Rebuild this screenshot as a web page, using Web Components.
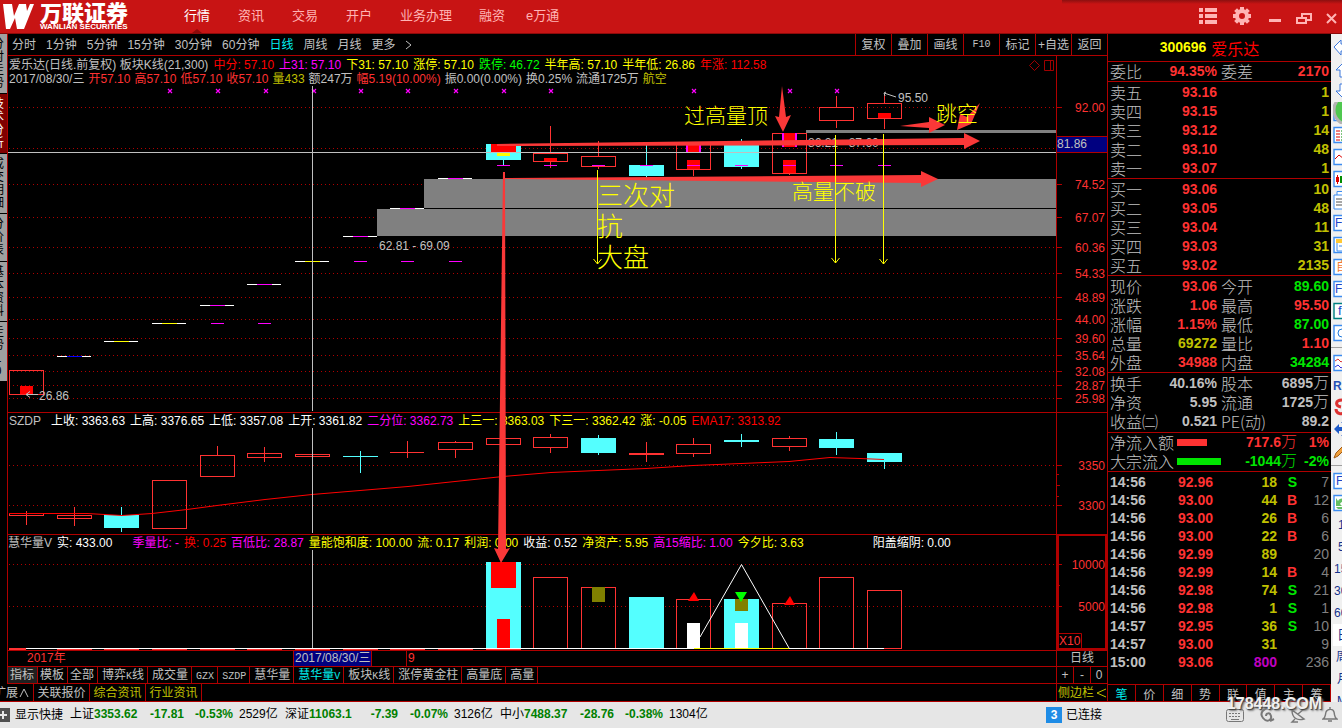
<!DOCTYPE html>
<html lang="zh-CN">
<head>
<meta charset="utf-8">
<title>万联证券 - 爱乐达 300696</title>
<style>
  html, body { margin: 0; background: #000; }
  body { font: 12px/14px "Liberation Sans", "Noto Sans CJK SC", sans-serif; color: #c0c0c0; }
</style>
</head>
<body>
<trade-app></trade-app>
<script>
const BASE = `
  *, *::before, *::after { box-sizing: border-box; }
  :host { display: block; min-width: 0; }
  button { appearance: none; border: 0; margin: 0; padding: 0; background: none; font: inherit; color: inherit; white-space: nowrap; cursor: pointer; }
  a { color: inherit; text-decoration: none; white-space: nowrap; }
  svg { display: block; }
  .red { color: #ff3232; } .pure { color: #f00; } .mag { color: #f0f; } .yel { color: #ff0; }
  .gold { color: #c0c000; } .grn { color: #00e600; } .lime { color: #0f0; } .wht { color: #fff; } .cyn { color: #00f0f0; } .dim { color: #808080; } .pur { color: #c000c0; }
`;
function define(name, css, html) {
  customElements.define(name, class extends HTMLElement {
    constructor() {
      super();
      const root = this.attachShadow({ mode: 'open' });
      root.innerHTML = `<style>${BASE}${css}</style>` + (typeof html === 'function' ? html(this) : html);
    }
  });
}

/* ---------- title bar ---------- */
define('app-header', `
  :host { display: flex; align-items: flex-start; height: 34px; background: #c81414; border-bottom: 1px solid #8c0a0a; }
  .brand { display: flex; gap: 6px; width: 172px; padding: 2px 0 0 3px; color: #fff; }
  .brand svg { margin-top: 2px; }
  .names { display: flex; flex-direction: column; gap: 2px; white-space: nowrap; }
  .cn { font: 900 22px/18px "Noto Sans CJK SC", sans-serif; }
  .en { font: bold 8px/9px "Liberation Sans", sans-serif; }
  nav { display: grid; grid-template-columns: 54px 54px 54px 54px 79px 47px auto; padding-left: 12px; font-size: 13px; line-height: 32px; color: #ffb4b4; }
  nav a { display: block; }
  nav .on { display: flex; flex-direction: column; align-items: center; width: 26px; height: 33px; color: #fff; }
  .on svg { margin-top: -3px; }
  .tools { flex: 1; display: flex; justify-content: flex-end; align-items: flex-start; gap: 14px; background: linear-gradient(#8c1010, #c81414) no-repeat right 0 top 0 / 280px 4px; height: 33px; padding: 7px 4px 0 0; }
`, `
  <div class="brand">
    <svg width="31" height="26" viewBox="0 0 31 26"><path fill="#fff" d="M0 0h9l2 12L16 0h7l1 7 3-7h4L21 25h-7l-2-11-5 11H3z"/></svg>
    <div class="names"><span class="cn">万联证券</span><span class="en">WANLIAN SECURITIES</span></div>
  </div>
  <nav>
    <a href="#" class="on">行情<svg width="10" height="4"><path d="M0 4L5 0l5 4z" fill="#8c0a0a"/></svg></a>
    <a href="#">资讯</a><a href="#">交易</a><a href="#">开户</a><a href="#">业务办理</a><a href="#">融资</a><a href="#">e万通</a>
  </nav>
  <div class="tools">
    <button aria-label="菜单"><svg width="20" height="18" fill="#ffb4b4"><path d="M1 1h4v4H1zM7 1h12v4H7zM1 7h4v4H1zM7 7h12v4H7zM1 13h4v4H1zM7 13h12v4H7z"/></svg></button>
    <button aria-label="设置"><svg width="20" height="18" viewBox="-10 -9 20 18" fill="none" stroke="#ffb4b4"><circle r="5" stroke-width="4"/><path d="M0-9V-6M0 6v3M-9 0h3M6 0h3M-6.400-6.400l2 2M4.400 4.400l2 2M-6.400 6.400l2-2M4.400-4.400l2-2" stroke-width="4"/></svg></button>
    <button aria-label="最小化"><svg width="16" height="18"><path d="M3 12h12v3H3z" fill="#ffb4b4"/></svg></button>
    <button aria-label="还原"><svg width="16" height="18" fill="none" stroke="#ffb4b4" stroke-width="2"><path d="M6 10V7h9v6h-4M1 11h9v5H1z"/></svg></button>
    <button aria-label="关闭"><svg width="12" height="18" fill="none" stroke="#ffb4b4" stroke-width="2"><path d="M1 7l9 9M10 7l-9 9"/></svg></button>
  </div>`);

/* ---------- vertical tabs on the left edge ---------- */
define('side-tabs', `
  :host { display: flex; flex-direction: column; width: 7px; overflow: hidden; background: #000; color: #000; }
  button { display: flex; justify-content: flex-end; width: 7px; padding: 4px 3px 0 0; overflow: hidden; background: #a0a0a0; border-bottom: 1px solid #000; align-items: flex-start; }
  span { width: 12px; flex: none; white-space: normal; line-height: 13px; word-break: break-all; }
  .t4 { height: 60px; } .t3 { height: 48px; }
  .sel { background: #800000; color: #fff; }
`, `
  <button class="t4"><span>分时走势</span></button><button class="t4 sel"><span>技术分析</span></button>
  <button class="t4"><span>成交明细</span></button><button class="t3"><span>分价表</span></button>
  <button class="t4"><span>基本资料</span></button><button class="t4"><span>走势10</span></button>`);

/* ---------- period toolbar ---------- */
define('period-bar', `
  :host { display: flex; justify-content: space-between; height: 22px; border-bottom: 1px solid #b00000; line-height: 20px; }
  .periods { display: flex; gap: 10px; padding-left: 4px; }
  .acts { display: flex; }
  .acts button { width: 36px; border-left: 1px solid #b00000; }
  .acts .lat { font: 10px/20px "Liberation Mono", monospace; }
`, `
  <div class="periods"><button>分时</button><button>1分钟</button><button>5分钟</button><button>15分钟</button><button>30分钟</button><button>60分钟</button><button class="cyn">日线</button><button>周线</button><button>月线</button><button>更多</button>
  <button aria-label="展开"><svg width="6" height="10" fill="none" stroke="#c0c0c0"><path d="M0 1l5 4-5 4"/></svg></button></div>
  <div class="acts"><button>复权</button><button>叠加</button><button>画线</button><button class="lat">F10</button><button>标记</button><button>+自选</button><button>返回</button></div>`);

/* ---------- one line of coloured readings ---------- */
define('info-line', `
  :host { display: flex; gap: 5px; white-space: nowrap; background: #000; width: max-content; }
  :host([dense]) { gap: 4px; }
`, `<slot></slot>`);

/* ---------- chart geometry ---------- */
const RED = '#ff3232', CYAN = '#54ffff';
const CX = i => Math.round(26 + i * 47.67);
const box = (x, y, w, h, fill) => `<rect x="${x}" y="${y}" width="${w}" height="${h}" fill="${fill}"/>`;
const frame = (i, y1, y2) => `<rect x="${CX(i) - 16.5}" y="${y1 + .5}" width="34" height="${y2 - y1}" fill="none" stroke="${RED}"/>`;
const wick = (i, y1, y2, c = RED) => box(CX(i), y1, 1, y2 - y1, c);
const solid = (i, y1, y2) => box(CX(i) - 17, y1, 35, y2 - y1, CYAN);
const core = (i, y1, y2, c = '#f00') => box(CX(i) - 6, y1, 13, y2 - y1, c);
const GRID = [107,148,184,217,247,273,297,319,338,355,371,385,398,465,505,564,606];
const grid = () => GRID.map(y => `<path d="M9 ${y}.5H1056" stroke="#b00000" stroke-dasharray="1 3"/>`).join('');
const flat = (i, y, c) => box(CX(i) - 17, y, 34, 1, '#fff') + box(CX(i) - 7, y, 15, 1, c);
const dash = (i, y) => box(CX(i) - 6, y, 13, 1, '#f0f');

function priceMarks() {
  let s = frame(0, 370, 394) + core(0, 386, 394);
  s += box(424, 179, 1000, 29, '#808080') + box(377, 209, 1000, 27, '#808080') + box(806, 130, 1000, 3, '#808080');
  [[1,356,'#00f'],[2,341,'#ff0'],[3,323,'#ff0'],[4,305,'#f0f'],[5,284,'#f0f'],[6,261,'#ff0'],[7,236,'#f0f'],[8,208,'#f0f'],[9,178,'#f0f']].forEach(a => s += flat(...a));
  [170,218,266,314,361,408,456,504,551,694,790,837].forEach(x => s += `<path d="M${x - 2} 89l4 4m0-4l-4 4" stroke="#f0f" stroke-width="1.2"/>`);
  s += solid(10,144,160) + box(491,144,25,8,'#f00') + box(497,153,13,3,'#ff0') + wick(10,160,165,CYAN);
  s += wick(11,126,153) + frame(11,153,161) + core(11,158,161) + wick(11,161,168);
  s += wick(12,141,156) + frame(12,156,166) + wick(12,166,169);
  s += wick(13,145,165,CYAN) + solid(13,165,176) + wick(13,176,178,CYAN);
  s += frame(14,144,169) + box(686,145,15,8,'#f0f') + box(688,145,11,8,'#f00') + core(14,160,169) + wick(14,169,176);
  s += wick(15,139,145,CYAN) + solid(15,145,167) + wick(15,167,169,CYAN);
  s += frame(16,133,173) + box(782,133,15,14,'#f0f') + box(784,133,11,14,'#f00') + core(16,160,173) + wick(16,173,175);
  s += wick(17,96,107) + frame(17,107,120) + wick(17,120,128);
  s += wick(18,94,103) + frame(18,103,118) + core(18,113,118) + wick(18,118,129);
  [[4,323],[5,323],[7,261],[8,261],[9,261]].forEach(a => s += dash(...a));
  for (let i = 10; i < 19; i++) s += dash(i, 165);
  s += `<path d="M38 394.5H26m4-3l-4 3 4 3M884 93l12 4m-10-5l-2 1 1 3" fill="none" stroke="#c0c0c0"/>`;
  s += `<g font-size="12" fill="#c0c0c0"><text x="39" y="400">26.86</text><text x="379" y="250">62.81 - 69.09</text><text x="898" y="102">95.50</text><text x="808" y="147">86.21 - 87.60</text></g>`;
  return s;
}
function indexMarks() {
  let s = wick(0,511,525) + frame(0,513,515) + wick(1,507,526) + frame(1,515,518) + solid(2,515,528) + wick(2,507,532,CYAN);
  s += frame(3,480,528) + wick(4,446,455) + frame(4,455,476) + wick(5,447,462) + frame(5,453,457) + wick(6,445,457,CYAN) + frame(6,454,456);
  s += solid(7,456,457) + wick(7,451,473,CYAN) + box(390,452,34,1,RED) + wick(8,441,458) + wick(9,441,442) + frame(9,442,449) + wick(9,450,458);
  s += frame(10,438,444) + wick(11,434,437) + frame(11,437,447) + wick(11,448,453) + solid(12,438,453) + wick(12,435,455,CYAN);
  s += box(629,453,35,2,RED) + wick(13,442,462) + frame(14,444,453) + wick(14,438,444) + wick(14,454,457);
  s += solid(15,440,442) + wick(15,434,447,CYAN) + frame(16,438,446) + wick(16,436,438) + wick(16,447,451) + solid(17,439,448) + wick(17,432,455,CYAN) + solid(18,453,462) + wick(18,453,469,CYAN);
  s += `<path fill="none" stroke="#f00" d="M9 513.5H87L122 515.5 152 513.5 187 509.5 217 505.5 265 499.5 312 494.5 360 490.5 408 486.5 455 481.5 503 476.5 551 472.5 598 470.5 646 468.5 693 465.5 741 463.5 789 461.5 830 457.5 860 458.5 884 459.5"/>`;
  return s;
}
function volumeMarks() {
  let s = solid(10,562,648) + box(491,562,25,26,'#f00') + core(10,619,648);
  s += frame(11,577,648) + frame(12,587,648) + core(12,587,602,'#808000') + solid(13,597,648) + frame(14,599,648) + box(687,623,13,25,'#fff');
  s += solid(15,599,648) + core(15,599,611,'#808000') + core(15,623,648,'#fff') + frame(16,603,648) + frame(17,577,648) + frame(18,590,648);
  s += `<path fill="#f00" d="M688 601h11l-5-9zM784 605h11l-5-9z"/><path fill="#0f0" d="M735 592h12l-6 10z"/>`;
  s += `<path d="M700 637L741.5 564.5 789 648" fill="none" stroke="#fff"/>`;
  s += box(9,648,17,2,RED) + box(26,648,858,1,'#fff') + box(694,648,95,1,'#ff0') + box(884,648,18,1,RED);
  for (let i = 1; i < 11; i++) s += box(CX(i) - 17, 649, 35, 1, RED);
  return s;
}
const notes = () => `
  <g fill="#fa3838">
    <path d="M782 86L786 117 791 115 783 132 775 116 779 117z"/>
    <path d="M497 144L964 138V133L980 141 964 149V145L497 146z"/>
    <path d="M504 178L921 175V171L938 179 921 187V183L504 179z"/>
    <path d="M503 172h2L506 549 510 548 501 563 494 548 498 549z"/>
    <path d="M900 126L929 122V117L945 125 929 133V128z"/>
    <path d="M980 103L971 124 957 130 960 114 967 117z"/>
  </g>
  <path fill="none" stroke="#ff0" d="M597.5 170V264M593.5 259l4 5 4-5M835.5 135V263M831.5 258l4 5 4-5M883.5 134V264M879.5 259l4 5 4-5"/>
  <g fill="#ff0" font-size="21" font-weight="300" font-family="'Noto Sans CJK SC', sans-serif"><text x="684" y="123">过高量顶</text><text x="792" y="199">高量不破</text><text x="936" y="121">跳空</text></g>
  <g fill="#ff0" font-size="26" font-weight="300" font-family="'Noto Sans CJK SC', sans-serif"><text x="597" y="205">三次对</text><text x="597" y="236">抗</text><text x="597" y="267">大盘</text></g>`;
const AXIS = [[107,'92.00'],[184,'74.52'],[217,'67.07'],[247,'60.36'],[273,'54.33'],[297,'48.89'],[319,'44.00'],[338,'39.60'],[355,'35.64'],[371,'32.08'],[385,'28.87'],[398,'25.98'],[465,'3350'],[505,'3300'],[564,'10000'],[606,'5000']];

define('chart-stage', `
  :host { display: grid; grid-template-columns: minmax(0, 1fr) 51px; grid-template-rows: 357px 122px 116px; background: #000; }
  svg { width: 100%; height: 595px; font-family: "Liberation Sans", "Noto Sans CJK SC", sans-serif; pointer-events: none; }
  .plot { grid-area: 1 / 1 / 4 / 2; }
  .axis { grid-area: 1 / 2 / 4 / 3; border-left: 1px solid #b00000; }
  .pane { grid-column: 1 / 3; border-bottom: 1px solid #b00000; overflow: hidden; }
  .p1 { grid-row: 1; padding: 2px 0 0 1px; } .p2 { grid-row: 2; padding: 1px 0 0 1px; } .p3 { grid-row: 3; padding-top: 1px; }
  .far { margin-left: 64px; } .mid { margin-left: 15px; } .gap { margin-left: 5px; }
`, `
  <svg class="plot"><g transform="translate(-8 -56)">${grid()}${priceMarks()}${indexMarks()}${volumeMarks()}
    <path d="M8 152.5H1400M312.5 86V411M312.5 423V533M312.5 550V648" stroke="#c0c0c0"/></g></svg>
  <div class="pane p1">
    <info-line><span>爱乐达(日线.前复权) 板块K线(21,300)</span><span class="pure">中分: 57.10</span><span class="mag">上31: 57.10</span><span class="yel">下31: 57.10</span><span class="yel">涨停: 57.10</span><span class="lime">跌停: 46.72</span><span class="yel">半年高: 57.10</span><span class="yel">半年低: 26.86</span><span class="pure">年涨: 112.58</span></info-line>
    <info-line dense><span>2017/08/30/三</span><span class="red">开57.10</span><span class="red">高57.10</span><span class="red">低57.10</span><span class="red">收57.10</span><span class="gold">量433</span><span>额247万</span><span class="red">幅5.19(10.00%)</span><span>振0.00(0.00%)</span><span>换0.25%</span><span>流通1725万</span><span class="gold">航空</span></info-line>
  </div>
  <div class="pane p2"><info-line><span>SZDP</span><span class="wht gap">上收: 3363.63</span><span class="wht">上高: 3376.65</span><span class="wht">上低: 3357.08</span><span class="wht">上开: 3361.82</span><span class="mag">二分位: 3362.73</span><span class="yel">上三一: 3363.03</span><span class="yel">下三一: 3362.42</span><span class="yel">涨: -0.05</span><span class="pure">EMA17: 3313.92</span></info-line></div>
  <div class="pane p3"><info-line><span>慧华量V</span><span class="wht">实: 433.00</span><span class="mag mid">季量比: -</span><span class="pure">换: 0.25</span><span class="mag">百低比: 28.87</span><span class="yel">量能饱和度: 100.00</span><span class="yel">流: 0.17</span><span class="yel">利润: 0.00</span><span class="wht">收益: 0.52</span><span class="yel">净资产: 5.95</span><span class="mag">高15缩比: 1.00</span><span class="yel">今夕比: 3.63</span><span class="wht far">阳盖缩阴: 0.00</span></info-line></div>
  <svg class="plot"><g transform="translate(-8 -56)">${notes()}<path d="M1034.5 60.5l5 5-5 5-5-5zM1044.5 60.5h9v10h-9zM1050.5 60v10" fill="none" stroke="#a00000"/></g></svg>
  <svg class="axis"><g transform="translate(-1057 -56)">
    <rect x="1057" y="136" width="50" height="16" fill="#000080"/><path d="M1057 136.5h50M1057 152.5h50" stroke="#b00000"/>
    <path d="M1058 535h48v114h-48z" fill="none" stroke="#b00000" stroke-width="2"/><path d="M1058 633.5h23.5V648" fill="none" stroke="#b00000"/>
    ${AXIS.map(([y]) => `<path d="M1057 ${y}.5h5" stroke="#b00000"/>`).join('')}<path d="M1057 474.5h2m-2 11h3m-3 11h2m-2 89h3" stroke="#b00000"/>
    <g font-size="12" fill="#ff3232" text-anchor="end">${AXIS.map(([y, t]) => `<text x="1105" y="${y + 5}">${t}</text>`).join('')}</g>
    <g font-size="12"><text x="1057" y="148" fill="#c0c0c0">81.86</text><text x="1059" y="645" fill="#ff3232">X10</text></g>
  </g></svg>`);

define('date-row', `
  :host { display: grid; grid-template-columns: 285px 79px 34px minmax(0, 1fr) 51px; height: 16px; line-height: 14px; border-bottom: 1px solid #b00000; white-space: nowrap; }
  .y { padding-left: 19px; } .cur { background: #000080; border: solid #b00000; border-width: 0 1px; padding-left: 1px; }
  .m { border-left: 1px solid #b00000; padding-left: 1px; grid-column: 4; } .p { border-left: 1px solid #b00000; text-align: center; }
`, `<span class="y red">2017年</span><span class="cur">2017/08/30/三</span><span class="m red">9</span><span class="p">日线</span>`);

define('template-tabs', `
  :host { display: flex; height: 17px; line-height: 16px; border-bottom: 1px solid #b00000; }
  button { padding: 0 3px 0 4px; border-right: 1px solid #b00000; flex: none; line-height: 16px; }
  .c { padding: 0 3px 0 2px; } .s { background: #202020; }
  i { font: 10px "Liberation Mono", monospace; }
  .zoom { display: flex; margin-left: auto; border-left: 1px solid #b00000; width: 51px; }
  .zoom button { flex: 1; padding: 0; } .zoom button:last-child { border: 0; }
`, `<button class="c s">指标</button><button class="c">模板</button><button class="c">全部</button><button>博弈<i>K</i>线</button><button>成交量</button><button><i>GZX</i></button><button><i>SZDP</i></button><button>慧华量</button><button class="cyn">慧华量<i>V</i></button><button>板块<i>K</i>线</button><button>涨停黄金柱</button><button>高量底</button><button>高量</button>
  <div class="zoom"><button>+</button><button>-</button><button>0</button></div>`);

define('news-tabs', `
  :host { display: flex; height: 18px; line-height: 16px; border-bottom: 1px solid #b00000; }
  button { width: 56px; border-right: 1px solid #b00000; line-height: 16px; }
  .x { width: 34px; display: flex; justify-content: flex-end; align-items: center; gap: 1px; overflow: hidden; padding-right: 4px; }
  .x svg { flex: none; }
  .side { margin-left: auto; width: 51px; border: 0; border-left: 1px solid #b00000; display: flex; align-items: center; gap: 2px; padding-left: 1px; }
`, `<button class="x">扩展<svg width="10" height="10" fill="none" stroke="#c0c0c0"><path d="M1 9l4-8 4 8"/></svg></button><button>关联报价</button><button class="gold">综合资讯</button><button class="gold">行业资讯</button>
  <button class="side gold">侧边栏<svg width="10" height="10" fill="none" stroke="#c0c000"><path d="M10 1L1 5l9 4"/></svg></button>`);

/* ---------- quote panel ---------- */
const row4 = (a, b, bc, c = '', d = '', dc = '') => `<tr><th>${a}</th><td class="${bc}">${b}</td><th>${c}</th><td class="${dc}">${d}</td></tr>`;
const table = rows => `<table><colgroup><col class="k"><col class="v"><col class="k2"><col></colgroup>${rows}</table>`;
const TICKS = [['14:56','92.96',18,'S',7],['14:56','93.00',44,'B',12],['14:56','93.00',26,'B',6],['14:56','93.00',22,'B',6],['14:56','92.99',89,'',20],['14:56','92.99',14,'B',4],['14:56','92.98',74,'S',21],['14:56','92.98',1,'S',1],['14:57','92.95',36,'S',10],['14:57','93.00',31,'',9],['15:00','93.06',800,'',236]];
define('quote-panel', `
  :host { display: flex; flex-direction: column; border-left: 1px solid #b00000; font: bold 14px/19px "Liberation Sans", "Noto Sans CJK SC", sans-serif; }
  section { border-bottom: 1px solid #b00000; padding: 1px 0 0; }
  .tight { padding: 0; } .loose { padding: 1px 0; }
  .title { height: 28px; display: flex; justify-content: center; align-items: center; gap: 5px; padding: 0 20px 0 0; }
  .title b { font: 16px/20px "Noto Sans CJK SC", sans-serif; }
  table { width: 100%; table-layout: fixed; border-collapse: collapse; }
  .k { width: 43px; } .k2 { width: 44px; } .v { width: 66px; }
  th { font: 300 16px/19px "Noto Sans CJK SC", sans-serif; text-align: left; padding: 0 0 0 2px; height: 19px; white-space: nowrap; }
  td { text-align: right; padding: 0; height: 19px; white-space: nowrap; }
  td:last-child { padding-right: 2px; }
  td + th { padding-left: 4px; }
  u { font: 300 16px/10px "Noto Sans CJK SC", sans-serif; text-decoration: none; }
  .flow th { width: 69px; } .flow .pct { width: 34px; } .flow i { display: block; height: 7px; background: #ff3232; width: 30px; } .flow i.g { background: #00e600; width: 44px; }
  .ticks { flex: 1; } .ticks td { height: 18px; line-height: 18px; }
  .t { width: 43px; } .p { width: 62px; } .q { width: 64px; } .d { width: 20px; }
  .ticks td:first-child { text-align: left; padding-left: 2px; }
  .ticks .n { font-weight: normal; }
  .tabs { display: flex; border-bottom: 1px solid #b00000; height: 17px; font: 12px/15px "Noto Sans CJK SC", sans-serif; }
  .tabs button { flex: 1; border-right: 1px solid #b00000; }
`, `
  <section class="title"><span class="yel">300696</span><b class="pure">爱乐达</b></section>
  <section class="tight">${table(row4('委比','94.35%','red','委差','2170','red'))}</section>
  <section>${table(row4('卖五','93.16','red','','1','gold')+row4('卖四','93.15','red','','1','gold')+row4('卖三','93.12','red','','14','gold')+row4('卖二','93.10','red','','48','gold')+row4('卖一','93.07','red','','1','gold'))}</section>
  <section>${table(row4('买一','93.06','red','','10','gold')+row4('买二','93.05','red','','48','gold')+row4('买三','93.04','red','','11','gold')+row4('买四','93.03','red','','31','gold')+row4('买五','93.02','red','','2135','gold'))}</section>
  <section>${table(row4('现价','93.06','red','今开','89.60','grn')+row4('涨跌','1.06','red','最高','95.50','red')+row4('涨幅','1.15%','red','最低','87.00','grn')+row4('总量','69272','gold','量比','1.10','red')+row4('外盘','34988','red','内盘','34284','grn'))}</section>
  <section class="loose">${table(row4('换手','40.16%','','股本','6895<u>万</u>')+row4('净资','5.95','','流通','1725<u>万</u>')+row4('收益㈡','0.521','','PE(动)','89.2'))}</section>
  <section class="tight flow"><table><tr><th>净流入额</th><td><i></i></td><td class="red">717.6<u>万</u></td><td class="pct red">1%</td></tr><tr><th>大宗流入</th><td><i class="g"></i></td><td class="grn">-1044<u>万</u></td><td class="pct grn">-2%</td></tr></table></section>
  <section class="ticks"><table><colgroup><col class="t"><col class="p"><col class="q"><col class="d"><col></colgroup>
    ${TICKS.map(([t, p, v, s, n]) => `<tr><td>${t}</td><td class="red">${p}</td><td class="${v === 800 ? 'pur' : 'gold'}">${v}</td><td class="${s === 'S' ? 'grn' : 'red'}">${s}</td><td class="dim n">${n}</td></tr>`).join('')}</table></section>
  <div class="tabs"><button class="cyn">笔</button><button>价</button><button>细</button><button>势</button><button>联</button><button>值</button><button>主</button><button>筹</button></div>`);

/* ---------- clipped tool strip at the right edge ---------- */
const bx = (s, c = '#3c8cf0') => `<path d="M1 3.5h17v15H1z" fill="#fff" stroke="${c}" stroke-width="1.4"/>${s}`;
const tx = (t, c = '#1e46c8', sz = 12, x = 3, y = 15) => `<text x="${x}" y="${y}" font-size="${sz}" fill="${c}">${t}</text>`;
const STRIP = [
  `<path d="M1 11l7-7v4h8v7H8v4z" fill="#fff" stroke="#3c78dc"/>`,
  `<path d="M3 12l8-8 8 8h-4v7H7v-7z" fill="#fff" stroke="#3c78dc"/>`,
  `<path d="M7 4h8v7h4l-8 8-8-8h4z" fill="#fff" stroke="#3c78dc"/>`,
  bx(`<circle cx="16" cy="8" r="15" fill="#50c850" stroke="#b4b4b4" stroke-width="3"/>`),
  bx(`<path d="M3 7h4m-4 3h4m-4 3h4m-4 3h4" stroke="#dc0000"/><path d="M8 7h4m-4 3h4m-4 3h4m-4 3h4" stroke="#008c00"/>`),
  bx(`<path d="M2 13l4-4 5 4" fill="none" stroke="#dc0000"/>`),
  bx(`<path d="M3 9h3v5H3zM4 7h1v9H4z" fill="#dc0000"/><path d="M7 8h3v7H7z" fill="#008c00"/>`),
  `<path d="M4 1.500h14v14H4z" fill="#fff" stroke="#3c8cf0"/><path d="M1 5h14v14H1z" fill="#fff" stroke="#3c8cf0"/><path d="M3 9h7m-7 3h7m-7 3h7" stroke="#505050"/>`,
  bx(tx('Fi', '#1e46c8', 12, 2)),
  bx(`<path d="M3 5h8v4H3z" fill="#ffc832"/><path d="M4 9v8h7M6 12h5" fill="none" stroke="#3c8cf0"/>`),
  bx(tx('自', '#f07832')),
  bx(tx('Fi', '#1e46c8', 12, 2)),
  bx(tx('f', '#1e46c8', 13, 5), '#008080'),
  bx(`<circle cx="9" cy="11" r="4" fill="none" stroke="#1e78dc"/>`),
  0,
  bx(`<path d="M2 9l3-2 3 3 3-2" fill="none" stroke="#dc3232"/><path d="M2 15l3-2 3 3 3-2" fill="none" stroke="#3232dc"/>`),
  `<text x="0" y="16" font-size="12" font-weight="bold" fill="#2850b4">R</text>`,
  `<path d="M9 4C2 4 2 10 8 11M3 13c0 5 6 6 9 3" fill="none" stroke="#dc3232" stroke-width="3"/>`,
  `<path d="M1 11l5-5v3h4V5H8l4-4v20l-4-4h2v-4H6v3z" fill="#1e5ac8"/>`,
  `<path d="M1 18l2-5 8-8v5l-6 6z" fill="#f0a03c" stroke="#a05a14"/>`,
  0,
  bx(tx('F')),
  bx(`<path d="M3 6l2 3c2-3 5-3 7-1v3c-3-2-4-1-5 1l2 2H3zM3 15h9v2H5z" fill="#64be64"/>`),
  tx('1', '#14328c', 12, 5), tx('5', '#14328c', 12, 5), tx('15', '#14328c', 12, 1), tx('30', '#14328c', 12, 1), tx('60', '#14328c', 12, 1),
  `<path d="M0 0h9v22H0z" fill="#fff"/>` + tx('日', '#14328c', 13, 4), tx('周', '#14328c'), tx('月', '#14328c', 12, 4), tx('M', '#14328c', 12, 4)];
define('tool-strip', `
  :host { display: flex; flex-direction: column; background: #f0f0f0; overflow: hidden; padding-top: 2px; height: 0; min-height: 100%; }
  button { display: block; width: 11px; height: 22px; flex: none; padding-left: 2px; overflow: hidden; }
  hr { width: 11px; height: 8px; margin: 0; border: 0; flex: none; background: linear-gradient(#a0a0a0, #a0a0a0) no-repeat 0 3px / 11px 1px; }
`, STRIP.map(s => s ? `<button aria-label="工具"><svg width="9" height="22">${s}</svg></button>` : '<hr>').join(''));

/* ---------- status bar ---------- */
define('index-quote', `
  :host { display: grid; grid-template-columns: 80px 33px 50px 52px; white-space: nowrap; }
  b { color: #008000; } .r { text-align: right; } .a { padding-left: 6px; }
`, el => `<span>${el.getAttribute('name')}<b>${el.getAttribute('value')}</b></span><b class="r">${el.getAttribute('change')}</b><b class="r">${el.getAttribute('percent')}</b><span class="a">${el.getAttribute('amount')}</span>`);
define('status-bar', `
  :host { display: flex; position: relative; height: 26px; background: #e6e6e6; color: #000; line-height: 24px; white-space: nowrap; }
  .add { width: 10px; margin-right: 5px; display: flex; align-items: center; }
  .quick { width: 55px; text-align: left; line-height: 24px; }
  .link { display: flex; align-items: center; gap: 4px; margin-left: auto; width: 180px; }
  .link b { width: 16px; height: 16px; background: #1e8ce6; color: #fff; text-align: center; line-height: 16px; }
  .ico { display: flex; align-items: center; gap: 14px; width: 116px; }
  .mark { position: absolute; right: 20px; top: -9px; font: bold 16px/22px "Liberation Sans", sans-serif; color: #f0f0f0; text-shadow: 1px 1px 1px #404040, 2px 2px 2px #808080; }
`, `
  <button class="add" aria-label="添加"><svg width="10" height="14"><path d="M0 0h10v14H0z" fill="#505050"/><path d="M0 7h7M3 3v8" stroke="#e6e6e6" stroke-width="2"/></svg></button>
  <button class="quick">显示快捷</button>
  <index-quote name="上证" value="3353.62" change="-17.81" percent="-0.53%" amount="2529亿"></index-quote>
  <index-quote name="深证" value="11063.1" change="-7.39" percent="-0.07%" amount="3126亿"></index-quote>
  <index-quote name="中小" value="7488.37" change="-28.76" percent="-0.38%" amount="1304亿"></index-quote>
  <div class="link"><b>3</b><span>已连接</span></div>
  <div class="ico">
    <svg width="18" height="16" fill="none" stroke="#787878"><rect x=".5" y="2.500" width="17" height="12" rx="2"/><path d="M3 6.500h12M3 9.500h12" stroke-dasharray="2 1"/><path d="M5 12.500h8"/></svg>
    <svg width="18" height="16" fill="none" stroke="#787878" stroke-width="2"><path d="M15 2C6-1 1 6 5 11s9 2 8-2-5-3-5 0M12 14l4-2"/></svg>
    <svg width="18" height="16" fill="none" stroke="#787878" stroke-width="1.4"><path d="M2 3c0 8 5 11 12 9zM8 7l6-5M5 12l-3 3h6"/></svg>
    <svg width="16" height="16" fill="none" stroke="#787878" stroke-width="1.4"><path d="M1 12c3-2 2-4 3-7s7-4 8 0 0 5 3 7zM6 14h4M8 0v2"/></svg>
  </div>
  <span class="mark">178448.COM</span>`);

define('trade-app', `
  :host { display: flex; flex-direction: column; min-height: 100vh; }
  main { flex: 1; display: grid; grid-template-columns: minmax(0, 1fr) 224px 11px; }
  .left { display: flex; flex-direction: column; min-width: 0; }
  .work { flex: 1; display: grid; grid-template-columns: 7px minmax(0, 1fr); }
  .chart { display: flex; flex-direction: column; border-left: 1px solid #b00000; min-width: 0; }
  chart-stage { flex: 1; }
`, `
  <app-header></app-header>
  <main>
    <div class="left">
      <div class="work"><side-tabs></side-tabs>
        <div class="chart"><period-bar></period-bar><chart-stage></chart-stage><date-row></date-row><template-tabs></template-tabs></div>
      </div>
      <news-tabs></news-tabs>
    </div>
    <quote-panel></quote-panel>
    <tool-strip></tool-strip>
  </main>
  <status-bar></status-bar>`);
</script>
</body>
</html>
